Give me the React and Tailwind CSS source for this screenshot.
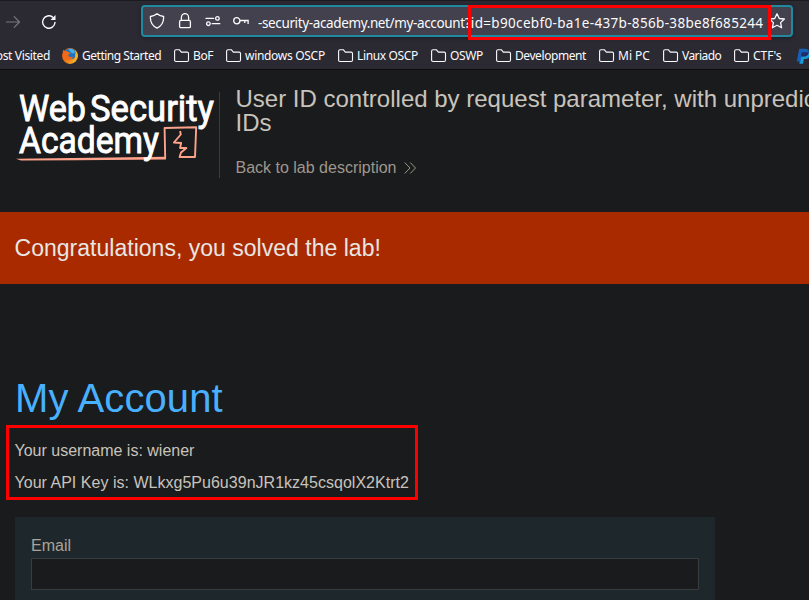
import React from 'react';

const Folder = () => (
  <svg className="h-4 w-4 shrink-0" viewBox="0 0 16 16" fill="none" stroke="#fbfbfe" strokeWidth="1.1">
    <path d="M.6 12.4V3.3Q.6 1.8 2.1 1.8H5.4L7.4 4.1H13.1Q14.5 4.1 14.5 5.5V12.1Q14.5 13.5 13.1 13.5H2.1Q.6 13.5 .6 12.1Z" />
  </svg>
);

const Firefox = () => (
  <svg className="h-4 w-4 shrink-0" viewBox="0 0 16 16">
    <defs>
      <linearGradient id="fox" x1="0" y1="0" x2="1" y2="1">
        <stop offset="0" stopColor="#e8530f" />
        <stop offset=".55" stopColor="#f07a18" />
        <stop offset="1" stopColor="#ffd23a" />
      </linearGradient>
    </defs>
    <circle cx="8" cy="8" r="7.9" fill="url(#fox)" />
    <path d="M3 2.8Q7-1.2 12 1.6 14.3 4 13.4 8.2 12 11.4 8.4 11.2 4 10 3 2.8Z" fill="#1c74bd" />
    <path d="M6 1.2Q9-.2 12 2L13 5 10 5.6 8 3Z" fill="#3fb2e8" />
    <path d="M.5 8 1 1.8 2.8 3.2Q5 2.6 6.5 4.2L9 4.8 7 6.3Q5.6 7.4 7.2 8.7 9 9.6 10.8 8.4 10.4 11 7 11.8L2 11Z" fill="#f0691a" />
    <path d="M12.6 1.4Q16.2 4.4 15.8 9L13 11.5Q14 8.5 12.9 5.5L14 6Q14 3.4 12.6 1.4Z" fill="#fbb32c" />
  </svg>
);

const PayPal = () => (
  <svg className="h-4 w-4 shrink-0" viewBox="0 0 16 16">
    <path d="M4.9 4.2H11Q15.7 4.6 13.9 8.3 12.5 11.2 9 10.9H7.9L7 15.8H3.4Z" fill="#179bd7" />
    <path d="M3.3.7H9.2Q13.5 1 12.8 4.6 11.9 8.6 7.4 8.5H5.4L4.4 13.4H.7Z" fill="#1461b8" />
    <path d="M5.7 4.2H11.3L12.8 4.6Q12 8.6 7.4 8.5H5Z" fill="#222d65" />
  </svg>
);

const bookmarks = [
  { label: 'BoF', box: 'w-[52px]', text: 'tracking-[-0.35px]' },
  { label: 'windows OSCP', box: 'w-[112px]', text: 'tracking-[-0.3px]' },
  { label: 'Linux OSCP', box: 'w-[93px]', text: 'tracking-[-0.35px]' },
  { label: 'OSWP', box: 'w-[65px]', text: 'tracking-[-0.35px]' },
  { label: 'Development', box: 'w-[103px]', text: 'tracking-[-0.42px]' },
  { label: 'Mi PC', box: 'w-[64px]', text: 'tracking-[0px]' },
  { label: 'Variado', box: 'w-[71px]', text: 'tracking-[-0.55px]' },
  { label: "CTF's", box: 'w-[62px]', text: 'tracking-[0px]' },
];

const Toolbar = () => (
  <div className="flex h-[42px] items-start border-t border-[#1c1b22] pl-[5px] pt-1">
    <svg className="mt-[9px] h-4 w-4" viewBox="0 0 16 16" fill="none" stroke="#77767e" strokeWidth="1.2" strokeLinecap="round" strokeLinejoin="round">
      <path d="M1.4 8H14.5M9.2 2.7 14.5 8 9.2 13.3" />
    </svg>
    <svg className="ml-5 mt-[9px] h-4 w-4" viewBox="0 0 16 16" fill="none" stroke="#fbfbfe" strokeWidth="1.4">
      <path d="M14 8.5A6.2 6.2 0 1 1 11.6 3.1" strokeLinecap="round" />
      <path d="M14.5 1V6H9.5Z" fill="#fbfbfe" stroke="none" />
    </svg>
    <div className="relative ml-[84px] flex h-8 w-[652px] items-center rounded-[4px] border-2 border-[#1e899f] bg-[#42414d] pl-1.5 shadow-[0_1px_4px_#00000055]">
      <svg className="h-4 w-4" viewBox="0 0 16 16" fill="none" stroke="#fbfbfe" strokeWidth="1.3" strokeLinejoin="round">
        <path d="M8 .7Q11 3.2 14.6 3.5 15.1 11.8 8 15.2.9 11.8 1.4 3.5 5 3.2 8 .7Z" />
      </svg>
      <svg className="ml-3 h-4 w-4" viewBox="0 0 16 16" fill="none" stroke="#fbfbfe" strokeWidth="1.3">
        <rect x="2.6" y="7.4" width="10.8" height="7.3" rx="1.3" />
        <path d="M4.4 7.4V4.2A3.6 3.6 0 0 1 11.6 4.2V7.4" />
      </svg>
      <svg className="ml-3 h-4 w-4" viewBox="0 0 16 16" fill="none" stroke="#fbfbfe" strokeWidth="1.3">
        <path d="M1 5.4H8.6M7.2 10.7H14.8" strokeLinecap="round" />
        <circle cx="12.4" cy="5.4" r="1.8" />
        <circle cx="3.4" cy="10.7" r="1.8" />
      </svg>
      <svg className="ml-3 h-4 w-4" viewBox="0 0 16 16" fill="none" stroke="#fbfbfe" strokeWidth="1.3">
        <circle cx="3.8" cy="7.8" r="3.1" />
        <path d="M7 7.5H15.8M15.1 7.5V11M11.8 7.5V10" />
      </svg>
      <span className="ml-[9px] mt-[3px] w-[511px] whitespace-nowrap font-['Noto_Sans'] text-[13.5px] leading-5 text-[#fbfbfe]">
        <span className="tracking-[-0.37px]">-security-academy.net/my-account</span>
        <span className="tracking-[0.33px]">?id=b90cebf0-ba1e-437b-856b-38be8f685244</span>
      </span>
      <svg className="h-4 w-4 shrink-0" viewBox="0 0 16 16" fill="none" stroke="#fbfbfe" strokeWidth="1.3" strokeLinejoin="round">
        <path d="M8 .8 10.3 5.5 15.4 6 11.6 9.6 12.6 14.8 8 12.3 3.4 14.8 4.4 9.6 .6 6 5.7 5.5Z" />
      </svg>
      <div className="absolute left-[325px] top-[-2px] h-[35px] w-[303px] border-[3px] border-[#ff0000]" />
    </div>
  </div>
);

const Bookmarks = () => (
  <div className="flex h-[27px] items-center overflow-hidden whitespace-nowrap font-['Noto_Sans'] text-[12px] text-[#fbfbfe]">
    <div className="flex w-[62px] shrink-0">
      <span className="flex w-[50px] justify-end tracking-[-0.35px]">Most Visited</span>
    </div>
    <div className="flex w-[112px] shrink-0 items-center gap-1">
      <Firefox />
      <span className="tracking-[-0.48px]">Getting Started</span>
    </div>
    {bookmarks.map((b) => (
      <div key={b.label} className={'flex shrink-0 items-center gap-[3px] ' + b.box}>
        <Folder />
        <span className={b.text}>{b.label}</span>
      </div>
    ))}
    <PayPal />
  </div>
);

const Logo = () => (
  <svg className="h-[86px] w-[204px] shrink-0 border-r border-[#3a3d3f]" viewBox="0 0 203 86">
    <g fill="none" stroke="#ffa28b" strokeLinejoin="round">
      <path d="M0 66.8 150 64.8 150 67.5 60 68.3 5 68.6Z" fill="#ffa28b" stroke="none" />
      <path d="M145 66H149.2L148.6 36 180.2 35.3 179 65H163.6L165 60.5 170.4 56H164.1L165.1 51 157.9 50.5 164.8 42.5 164.1 39" strokeWidth="1.9" />
    </g>
    <g fill="#fff" stroke="#fff" strokeWidth=".9" fontFamily="Roboto, 'Liberation Sans', sans-serif" fontWeight="400" fontSize="36.5">
      <text x="3" y="28.5" textLength="67" lengthAdjust="spacingAndGlyphs">Web</text>
      <text x="74" y="28.5" textLength="124" lengthAdjust="spacingAndGlyphs">Security</text>
      <text x="3" y="60.5" textLength="140" lengthAdjust="spacingAndGlyphs">Academy</text>
    </g>
  </svg>
);

export default function App() {
  return (
    <div className="h-[600px] w-[809px] overflow-hidden bg-[#1a1b1c] font-['Liberation_Sans',Arial,sans-serif] text-[#c8c3bc]">
      <div className="h-[70px] border-b border-[#0c0c0d] bg-[#2b2a33]">
        <Toolbar />
        <Bookmarks />
      </div>
      <header className="flex h-[142px] pl-4 pt-[22px]">
        <Logo />
        <div className="-mt-[5px] ml-[15.5px] w-[760px] shrink-0">
          <h2 className="whitespace-nowrap text-2xl leading-6">
            User ID controlled by request parameter, with unpredictable user
            <br />
            IDs
          </h2>
          <a className="mt-[21px] flex items-center text-base leading-6 text-[#9f978c]">
            Back to lab description
            <svg className="ml-2 h-3 w-3" viewBox="0 0 12 12" fill="none" stroke="#9f978c" strokeWidth="1">
              <path d="M.7.5 6 6 .7 11.5M6.2.5 11.5 6 6.2 11.5" />
            </svg>
          </a>
        </div>
      </header>
      <section className="flex h-[72px] items-center bg-[#aa2a00] pl-[14.5px] text-[23px] tracking-[0.02px] text-[#e8e6e3]">
        Congratulations, you solved the lab!
      </section>
      <main className="pl-[15px] pt-[91px]">
        <h1 className="text-[40px] leading-[46px] tracking-[0.1px] text-[#48b0ff]">My Account</h1>
        <div className="-ml-[9px] mt-1 h-[75px] w-[412px] border-[3px] border-[#ff0000] pl-[5.5px] pt-[11px] text-base leading-6">
          <p>Your username is: wiener</p>
          <p className="mt-2 tracking-[0.02px]">Your API Key is: WLkxg5Pu6u39nJR1kz45csqolX2Ktrt2</p>
        </div>
        <form className="mt-[17px] h-[84px] w-[700px] bg-[#1e282c] px-4 pt-[17px]">
          <label className="block text-base leading-6 text-[#aaa297]">Email</label>
          <div className="h-8 border border-[#373c3e] bg-[#1a1b1c]" />
        </form>
      </main>
    </div>
  );
}
